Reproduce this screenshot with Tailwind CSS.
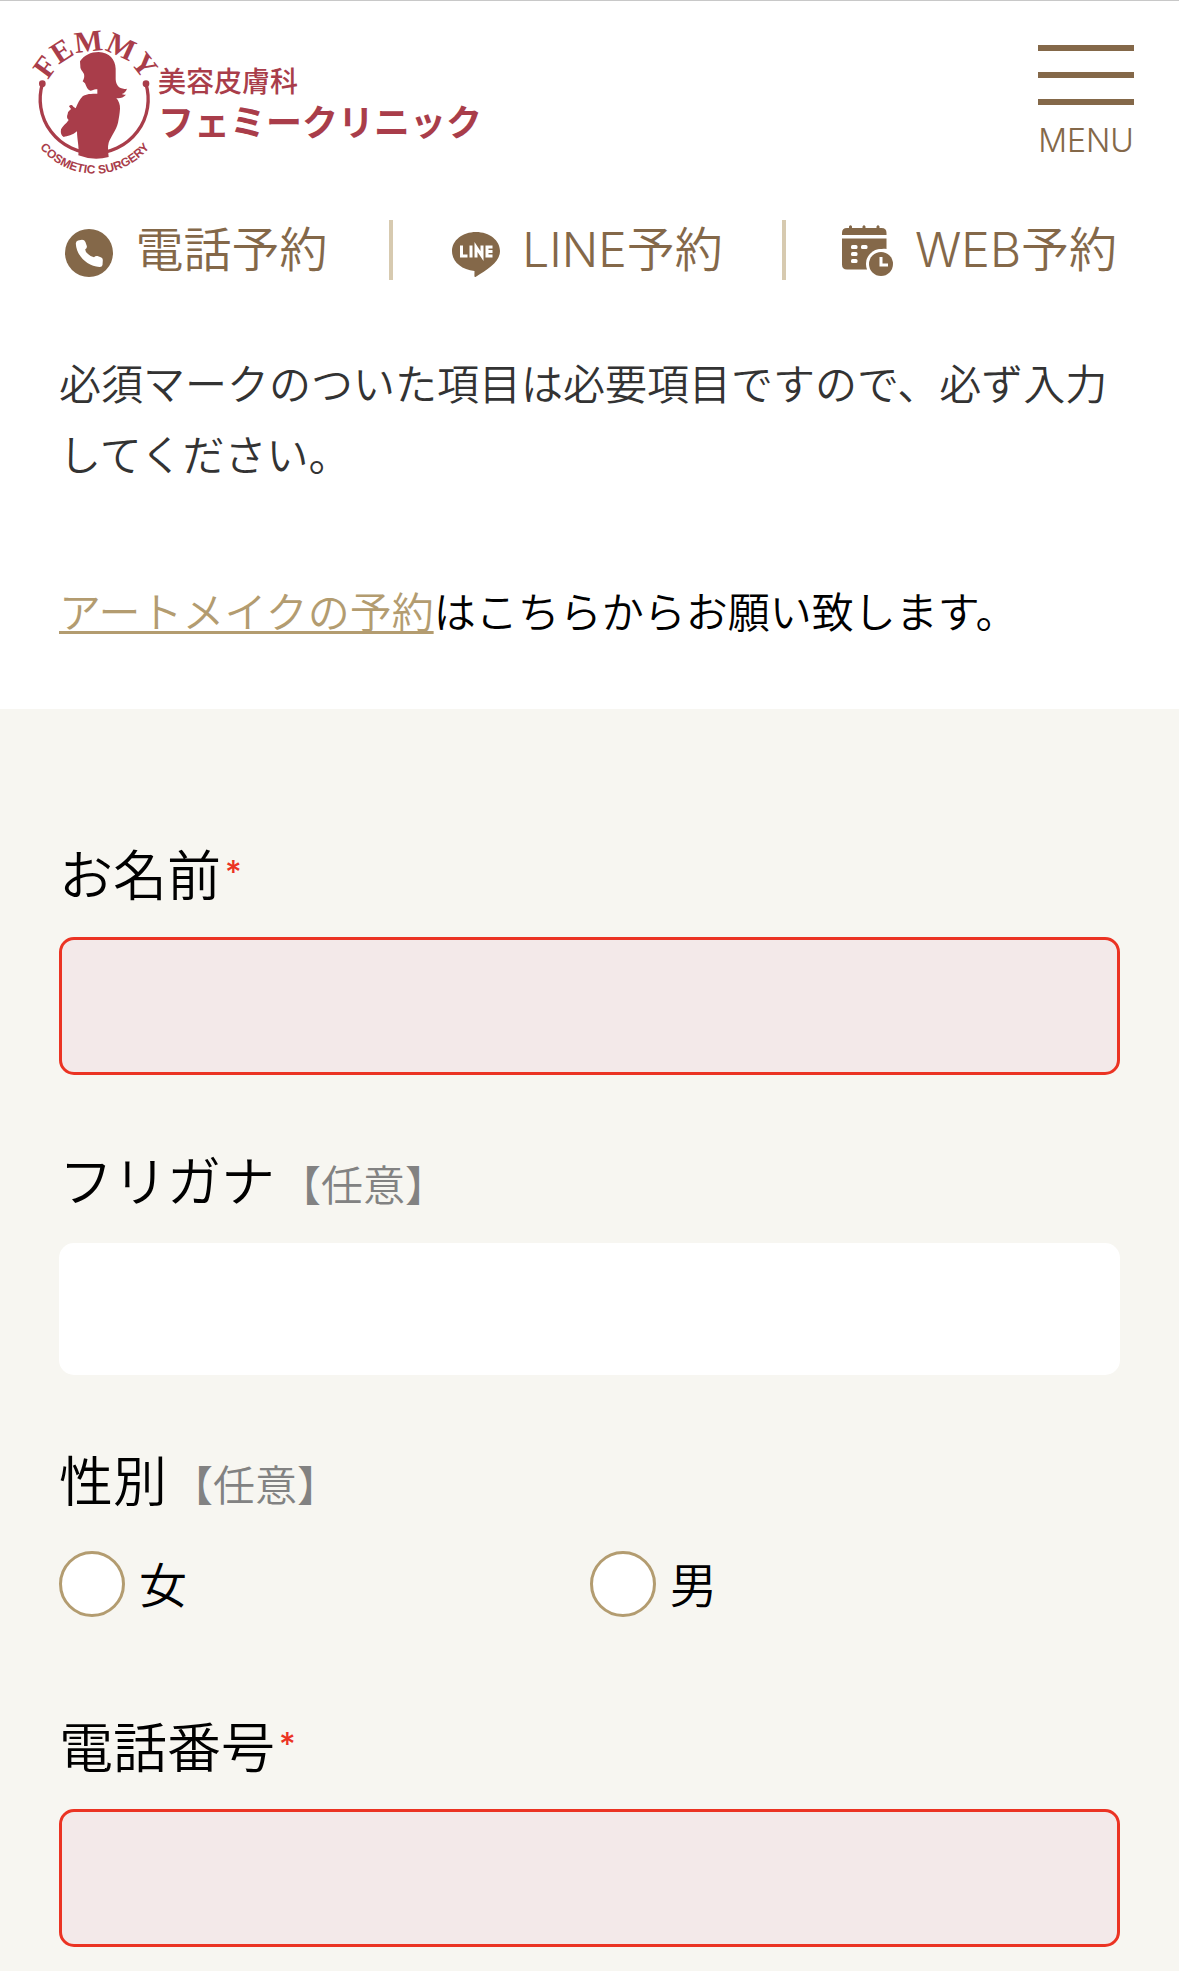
<!DOCTYPE html>
<html lang="ja">

<head>
    <meta charset="UTF-8">
    <meta name="viewport" content="width=device-width, initial-scale=1.0">
    <title>WEB予約 | フェミークリニック</title>
    <script src="https://cdn.jsdelivr.net/npm/@tailwindcss/browser@4"></script>
</head>

<body class="bg-white text-black font-[350] font-['Noto_Sans_CJK_JP',sans-serif]">
    <!-- Header -->
    <header class="border-t border-[#c8c8c8]">
        <div class="flex justify-between items-start pl-7 pr-[45px] pt-[27px]">
            <a href="#" class="flex items-start text-[#a93d4a]">
                <svg class="w-[132px] h-[148px] shrink-0 overflow-visible" viewBox="24 84 396 444" fill="currentColor" aria-hidden="true">
                    <defs>
                        <path id="arcTop" d="M69 310 A157 157 0 0 1 383 310" />
                        <path id="arcBottom" d="M13 310 A211 211 0 0 0 435 310" />
                    </defs>
                    <text class="font-['Liberation_Serif',serif] font-bold text-[90px]" text-anchor="middle">
                        <textPath href="#arcTop" startOffset="50%">FEMMY</textPath>
                    </text>
                    <text class="font-['Liberation_Sans_Narrow','Liberation_Sans',sans-serif] font-bold text-[36px]" text-anchor="middle">
                        <textPath href="#arcBottom" startOffset="50%">COSMETIC SURGERY</textPath>
                    </text>
                    <path d="M67 252 A162 162 0 1 0 378 252" fill="none" stroke="currentColor" stroke-width="10" />
                    <circle cx="67" cy="251" r="10" />
                    <circle cx="378" cy="251" r="10" />
                    <path d="M180 184 C192 166 212 156 236 156 C268 157 286 178 287 206 V238 C288 256 298 270 321 266 C318 275 312 280 305 282 C310 285 315 284 318 284 C310 293 299 296 289 294 C296 303 301 314 300 326 C299 342 297 352 294 368 C289 390 272 410 266 428 C262 442 265 456 266 471 Q222 484 175 466 C178 438 171 420 171 394 C158 406 142 408 131 411 C124 407 121 400 123 388 C128 377 138 372 146 360 C140 356 140 349 143 342 C143 334 150 332 153 327 L147 319 C151 314 156 314 160 320 L167 325 C173 311 179 298 188 289 C198 281 214 281 232 281 V268 C223 266 218 271 211 272 C203 270 200 262 195 250 L188 244 C192 236 194 230 192 222 C188 214 180 208 181 199 Z" />
                </svg>
                <span class="flex flex-col pt-8 -ml-0.5">
                    <span class="text-[28px] leading-[40px] font-medium">美容皮膚科</span>
                    <span class="text-[36px] leading-[40px] font-bold">フェミークリニック</span>
                </span>
            </a>
            <button type="button" class="flex flex-col items-center pt-[17px] text-[#846849]">
                <span class="flex flex-col gap-[21px] w-24">
                    <span class="h-1.5 bg-[#846849]"></span>
                    <span class="h-1.5 bg-[#846849]"></span>
                    <span class="h-1.5 bg-[#846849]"></span>
                </span>
                <span class="mt-3 font-['Inter',sans-serif] font-light text-[32px] leading-[48px]">MENU</span>
            </button>
        </div>

        <nav class="grid grid-cols-3 mt-11 h-[60px] font-['Inter','Noto_Sans_CJK_JP',sans-serif] text-[48px] leading-[60px] text-[#846849] whitespace-nowrap">
            <a href="#" class="flex items-center justify-center gap-5.5 pl-1 border-r-4 border-[#d7cab0]">
                <svg class="w-12 h-12 mt-1.5" viewBox="0 0 48 48" aria-hidden="true">
                    <circle cx="24" cy="24" r="24" fill="currentColor" />
                    <path fill="#fff" d="M13 11.500 L17 10.800 Q19.500 10.800 20.400 13 L21.800 17 Q22.300 19.200 20.300 20.300 Q20 22.500 23 25 Q26 28 29 28.200 Q30.500 26.600 32.500 27 L36.300 28.600 Q38 29.500 37.800 31.500 L37.500 36 Q37 38.200 34.500 38 C22 37 11.500 27 10.800 14.500 Q11 12 13 11.500 Z" />
                </svg>
                <span>電話予約</span>
            </a>
            <a href="#" class="flex items-center justify-center gap-5.5 border-r-4 border-[#d7cab0]">
                <svg class="w-12 h-12 mt-2" viewBox="0 0 48 48" aria-hidden="true">
                    <path fill="currentColor" d="M24 2 C37.500 2 48 10.500 48 21 C48 32 36 39 23.500 47 C22 47.500 22.500 45 22.500 41 C9 39.500 0 31.500 0 21 C0 10.500 10.500 2 24 2 Z" />
                    <g fill="none" stroke="#fff" stroke-width="3">
                        <path d="M9.500 15.500 V26 H15.500" />
                        <path d="M19 15.500 V27.500" />
                        <path d="M24 27.500 V17 L30 26 V15.500" />
                        <path d="M40.500 17 H35 V26 H40.500 M35 21.500 H40.500" />
                    </g>
                </svg>
                <span>LINE予約</span>
            </a>
            <a href="#" class="flex items-center justify-center gap-5.5 pr-1.5">
                <svg class="w-[51px] h-[51px]" viewBox="0 0 51 51" fill="currentColor" aria-hidden="true">
                    <path d="M0 10 V8 Q0 3 5 3 H7 V1.500 Q8.500 -1 10 1.500 V3 H20.500 V1.500 Q22 -1 23.500 1.500 V3 H34.500 V1.500 Q36 -1 37.500 1.500 V3 H39.500 Q44.500 3 44.500 8 V10 Z" />
                    <path d="M0 13.500 H44.500 V24 C34 22 25 31 25 44.500 H5 Q0 44.500 0 39.500 Z" />
                    <g fill="#fff">
                        <rect x="9" y="20" width="6.500" height="4" rx="1.500" />
                        <rect x="19" y="20" width="6.500" height="4" rx="1.500" />
                        <rect x="9" y="27" width="6.500" height="4" rx="1.500" />
                        <rect x="9" y="34" width="6.500" height="4" rx="1.500" />
                    </g>
                    <circle cx="39" cy="39" r="15" fill="#fff" />
                    <circle cx="39" cy="39" r="12" />
                    <path d="M39 32 V40 H46" fill="none" stroke="#fff" stroke-width="3" />
                </svg>
                <span>WEB予約</span>
            </a>
        </nav>
    </header>

    <main>
        <!-- Lead text -->
        <div class="px-[59px] pt-[66px] pb-16 text-[42px] leading-[71px]">
            <p class="text-[#333]">必須マークのついた項目は必要項目ですので、必ず入力してください。</p>
            <p class="mt-[86px]"><a href="#" class="text-[#b39c70] underline decoration-3 underline-offset-[3px] [text-decoration-skip-ink:none]">アートメイクの予約</a>はこちらからお願い致します。</p>
        </div>

        <!-- Form -->
        <form class="flex flex-col gap-16 bg-[#f7f6f1] px-[59px] pt-[124px] pb-16">
            <div>
                <label for="name" class="flex items-center mb-6 text-[54px] leading-[80px]">お名前<span class="ml-1 font-['Inter',sans-serif] font-medium text-[32px] leading-[80px] text-[#eb3323]">*</span></label>
                <input type="text" id="name" name="name" required class="block w-full h-[138px] px-6 rounded-[15px] border-3 border-[#eb3323] bg-[#f3e9e9] text-[42px]">
            </div>

            <div>
                <label for="kana" class="flex items-center mb-6 text-[54px] leading-[80px]">フリガナ<span class="ml-1 pt-2 text-[42px] leading-[72px] text-[#828282]">【任意】</span></label>
                <input type="text" id="kana" name="kana" class="block w-full h-[132px] px-6 rounded-[15px] bg-white text-[42px]">
            </div>

            <fieldset>
                <legend class="flex items-center mb-8 text-[54px] leading-[80px]">性別<span class="ml-1 pt-2 text-[42px] leading-[72px] text-[#828282]">【任意】</span></legend>
                <div class="grid grid-cols-2 pb-6 text-[48px] leading-[62px]">
                    <label class="flex items-start gap-3.5">
                        <input type="radio" name="gender" value="female" class="appearance-none w-[66px] h-[66px] rounded-full border-3 border-[#b39c70] bg-white checked:bg-[#b39c70]">女
                    </label>
                    <label class="flex items-start gap-3.5">
                        <input type="radio" name="gender" value="male" class="appearance-none w-[66px] h-[66px] rounded-full border-3 border-[#b39c70] bg-white checked:bg-[#b39c70]">男
                    </label>
                </div>
            </fieldset>

            <div>
                <label for="tel" class="flex items-center mb-6 text-[54px] leading-[80px]">電話番号<span class="ml-1 font-['Inter',sans-serif] font-medium text-[32px] leading-[80px] text-[#eb3323]">*</span></label>
                <input type="tel" id="tel" name="tel" required class="block w-full h-[138px] px-6 rounded-[15px] border-3 border-[#eb3323] bg-[#f3e9e9] text-[42px]">
            </div>
        </form>
    </main>
</body>

</html>
